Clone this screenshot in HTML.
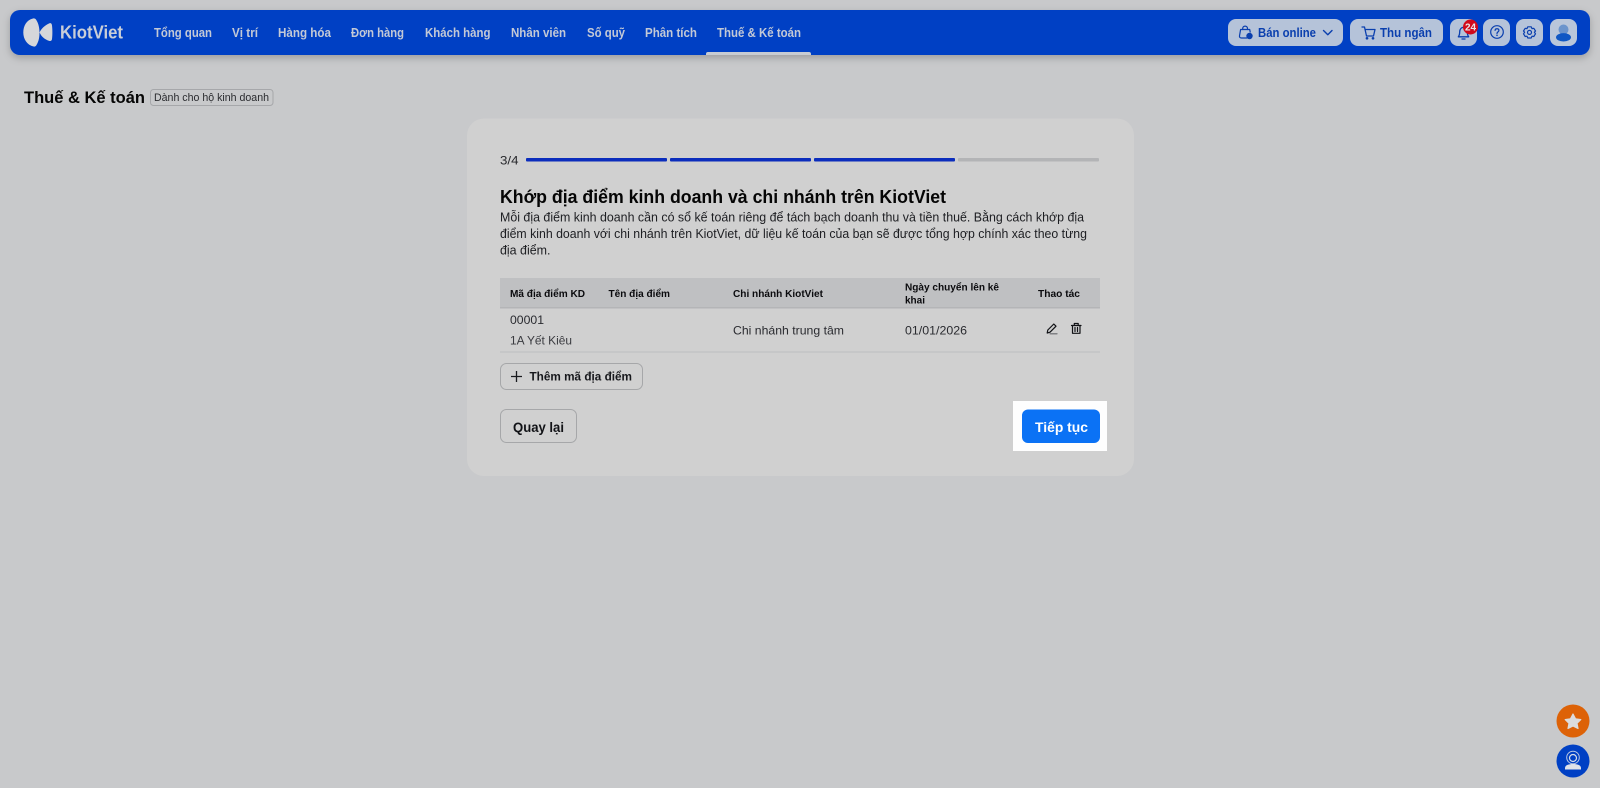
<!DOCTYPE html>
<html lang="vi">
<head>
<meta charset="utf-8">
<title>Thuế &amp; Kế toán</title>
<style>
html,body{margin:0;padding:0;width:1600px;height:788px;overflow:hidden;background:#c8c9cb}
svg{display:block;filter:blur(.3px)}
text{font-family:"Liberation Sans","Noto Sans CJK SC",sans-serif;white-space:pre}
.nav{font-size:13px;font-weight:700;fill:#c3c9d6}
.th{font-size:10.5px;font-weight:700;fill:#0b0b0e}
.td{font-size:12px;fill:#2a2b30}
.p{font-size:12.5px;fill:#1d1e22}
.bt{font-size:13px;font-weight:700;fill:#0a3fae}
</style>
</head>
<body>
<svg width="1600" height="788" viewBox="0 0 1600 788" xmlns="http://www.w3.org/2000/svg">
<defs>
<filter id="sh" x="-5%" y="-50%" width="110%" height="220%"><feDropShadow dx="0" dy="3" stdDeviation="4" flood-color="#000" flood-opacity=".22"/></filter>
</defs>
<rect width="1600" height="788" fill="#c8c9cb"/>

<!-- top bar -->
<rect x="10" y="10" width="1580" height="45" rx="10" fill="#0040c4" filter="url(#sh)"/>
<path d="M33 18.500C26.500 20 23.300 26 23.300 32.500C23.300 39 27 45 33.500 46.500C35 46.800 36 46 36.500 45C39 41 39.500 36.500 39.500 32.500C39.500 28 38.500 23.500 36.300 20C35.500 18.800 34.500 18.200 33 18.500Z" fill="#d6d7da"/>
<path d="M49.500 23.300C44.500 25.500 41 29 39.600 32.500C41 36 44.500 39.500 49.500 41C51 41.300 51.800 40.500 52 39C52.500 35 52.500 29.500 52 25.500C51.800 23.800 51 22.800 49.500 23.300Z" fill="#d6d7da"/>
<text x="60" y="38.500" font-size="18" font-weight="700" fill="#c9ced8" textLength="63" lengthAdjust="spacingAndGlyphs">KiotViet</text>

<text class="nav" x="154" y="37" textLength="58" lengthAdjust="spacingAndGlyphs">Tổng quan</text>
<text class="nav" x="232" y="37" textLength="26" lengthAdjust="spacingAndGlyphs">Vị trí</text>
<text class="nav" x="278" y="37" textLength="53" lengthAdjust="spacingAndGlyphs">Hàng hóa</text>
<text class="nav" x="351" y="37" textLength="53" lengthAdjust="spacingAndGlyphs">Đơn hàng</text>
<text class="nav" x="425" y="37" textLength="65.500" lengthAdjust="spacingAndGlyphs">Khách hàng</text>
<text class="nav" x="511" y="37" textLength="55" lengthAdjust="spacingAndGlyphs">Nhân viên</text>
<text class="nav" x="587" y="37" textLength="38" lengthAdjust="spacingAndGlyphs">Số quỹ</text>
<text class="nav" x="645" y="37" textLength="52" lengthAdjust="spacingAndGlyphs">Phân tích</text>
<text class="nav" x="717" y="37" textLength="84" lengthAdjust="spacingAndGlyphs">Thuế &amp; Kế toán</text>
<path d="M706 55V54Q706 52 708 52H809Q811 52 811 54V55Z" fill="#c8ccd3"/>

<!-- top right buttons -->
<rect x="1228" y="19" width="115" height="27" rx="8" fill="#b5c3d9"/>
<g fill="none" stroke="#0a3fae" stroke-width="1.200" stroke-linecap="round" stroke-linejoin="round">
<path d="M1247 38H1241.500C1240 38 1239.300 37 1239.500 35.800L1240.600 29.500H1249.700L1250.200 32"/>
<path d="M1242.700 29.500V28.500C1242.700 25.300 1247.500 25.300 1247.500 28.500V29.500"/>
<path d="M1323.500 30.500L1327.800 34.800L1332 30.500" stroke-width="1.400"/>
</g>
<circle cx="1249.500" cy="36" r="3.200" fill="#0a3fae"/>
<text class="bt" x="1258" y="37" textLength="58" lengthAdjust="spacingAndGlyphs">Bán online</text>

<rect x="1350" y="19" width="93" height="27" rx="8" fill="#b5c3d9"/>
<g fill="none" stroke="#0a3fae" stroke-width="1.300" stroke-linecap="round" stroke-linejoin="round">
<path d="M1362 27H1364.500L1366.500 36H1373.500L1375 29.500H1365"/>
<circle cx="1367" cy="38.300" r=".7"/><circle cx="1373" cy="38.300" r=".7"/>
</g>
<text class="bt" x="1380" y="37" textLength="52" lengthAdjust="spacingAndGlyphs">Thu ngân</text>

<rect x="1450" y="19" width="27" height="27" rx="8" fill="#b5c3d9"/>
<g fill="none" stroke="#0a3fae" stroke-width="1.300" stroke-linecap="round" stroke-linejoin="round">
<path d="M1458.300 36.800C1459.400 35.500 1459.700 34 1459.700 31.800C1459.700 29 1461.500 27.300 1463.500 27.300C1465.500 27.300 1467.300 29 1467.300 31.800C1467.300 34 1467.600 35.500 1468.700 36.800Z"/>
<path d="M1462 39H1465"/>
</g>
<circle cx="1470.500" cy="27" r="7.500" fill="#d1091b"/>
<text x="1470.500" y="30.500" font-size="10" font-weight="700" fill="#e8e8e8" text-anchor="middle">24</text>

<rect x="1483" y="19" width="27" height="27" rx="8" fill="#b5c3d9"/>
<circle cx="1497" cy="32" r="6.300" fill="none" stroke="#0a3fae" stroke-width="1.200"/>
<path d="M1495.100 30.400C1495.200 28.200 1498.900 28.200 1498.900 30.400C1498.900 31.900 1497 31.900 1497 33.500" fill="none" stroke="#0a3fae" stroke-width="1.200" stroke-linecap="round"/>
<circle cx="1497" cy="35.300" r=".8" fill="#0a3fae"/>

<rect x="1516" y="19" width="27" height="27" rx="8" fill="#b5c3d9"/>
<path d="M1527.800 26.800H1531.200L1532 28.600L1533.800 28.300L1535.500 31L1534.400 32.300L1535.500 33.800L1533.800 36.500L1532 36.200L1531.200 38H1527.800L1527 36.200L1525.200 36.500L1523.500 33.800L1524.600 32.300L1523.500 31L1525.200 28.300L1527 28.600Z" fill="none" stroke="#0a3fae" stroke-width="1.200" stroke-linejoin="round"/>
<circle cx="1529.500" cy="32.400" r="2" fill="none" stroke="#0a3fae" stroke-width="1.200"/>

<rect x="1550" y="19" width="27" height="27" rx="8" fill="#b9c6da"/>
<circle cx="1563.500" cy="29.500" r="5" fill="#6b94cc"/>
<ellipse cx="1563.500" cy="37.300" rx="7.500" ry="4.200" fill="#0f57c4"/>

<!-- page heading -->
<text x="24" y="103" font-size="17" font-weight="700" fill="#050505" textLength="121" lengthAdjust="spacingAndGlyphs">Thuế &amp; Kế toán</text>
<rect x="150.500" y="89.500" width="122.500" height="16" rx="3" fill="none" stroke="#a6a7aa"/>
<text x="154" y="101.200" font-size="11" fill="#2a2b2f" textLength="115" lengthAdjust="spacingAndGlyphs">Dành cho hộ kinh doanh</text>

<!-- card -->
<rect x="467" y="118.500" width="667" height="357.500" rx="17" fill="#d0d0d0"/>
<text x="500" y="164.500" font-size="12" fill="#26272b" textLength="18.500" lengthAdjust="spacingAndGlyphs">3/4</text>
<rect x="526" y="158" width="141" height="3.500" rx="1" fill="#0b2dbc"/>
<rect x="670" y="158" width="141" height="3.500" rx="1" fill="#0b2dbc"/>
<rect x="814" y="158" width="141" height="3.500" rx="1" fill="#0b2dbc"/>
<rect x="958" y="158" width="141" height="3.500" rx="1" fill="#b3b4b6"/>

<text x="500" y="203" font-size="18" font-weight="700" fill="#050505" textLength="446" lengthAdjust="spacingAndGlyphs">Khớp địa điểm kinh doanh và chi nhánh trên KiotViet</text>
<text class="p" x="500" y="221.500" textLength="584" lengthAdjust="spacingAndGlyphs">Mỗi địa điểm kinh doanh cần có sổ kế toán riêng để tách bạch doanh thu và tiền thuế. Bằng cách khớp địa</text>
<text class="p" x="500" y="238" textLength="587" lengthAdjust="spacingAndGlyphs">điểm kinh doanh với chi nhánh trên KiotViet, dữ liệu kế toán của bạn sẽ được tổng hợp chính xác theo từng</text>
<text class="p" x="500" y="254.500" textLength="50.500" lengthAdjust="spacingAndGlyphs">địa điểm.</text>

<!-- table -->
<rect x="500" y="278" width="600" height="30" fill="#bfc0c2"/>
<rect x="500" y="307" width="600" height="1.500" fill="#b4b5b7"/>
<text class="th" x="510" y="297" textLength="75" lengthAdjust="spacingAndGlyphs">Mã địa điểm KD</text>
<text class="th" x="608.500" y="297" textLength="61.500" lengthAdjust="spacingAndGlyphs">Tên địa điểm</text>
<text class="th" x="733" y="297" textLength="90" lengthAdjust="spacingAndGlyphs">Chi nhánh KiotViet</text>
<text class="th" x="905" y="290.500" textLength="94" lengthAdjust="spacingAndGlyphs">Ngày chuyển lên kê</text>
<text class="th" x="905" y="303.500" textLength="20" lengthAdjust="spacingAndGlyphs">khai</text>
<text class="th" x="1038" y="297" textLength="42" lengthAdjust="spacingAndGlyphs">Thao tác</text>

<text class="td" x="510" y="324" textLength="34" lengthAdjust="spacingAndGlyphs">00001</text>
<text class="td" x="510" y="344.500" textLength="62" lengthAdjust="spacingAndGlyphs" style="fill:#3a3b40">1A Yết Kiêu</text>
<text class="td" x="733" y="334.500" textLength="111" lengthAdjust="spacingAndGlyphs">Chi nhánh trung tâm</text>
<text class="td" x="905" y="334.500" textLength="62" lengthAdjust="spacingAndGlyphs">01/01/2026</text>

<g fill="none" stroke="#111216" stroke-width="1.200" stroke-linejoin="round" stroke-linecap="round">
<path d="M1047.200 333L1047.800 330L1053.800 324L1056 326.200L1050 332.200Z"/>
<path d="M1050 333.800H1057" stroke="#66676b"/>
<path d="M1071.500 325.500H1081M1074.300 325.500V323.500H1078.200V325.500"/>
<path d="M1072.500 325.500V333.300H1080V325.500"/>
<path d="M1075 327.500V331.500M1077.500 327.500V331.500"/>
</g>
<rect x="500" y="351.500" width="600" height="1" fill="#bdbec0"/>

<!-- add -->
<rect x="500.500" y="363.500" width="142" height="26" rx="6" fill="none" stroke="#a6a7a9"/>
<path d="M516.500 371V382M511 376.500H522" stroke="#1a1b1f" stroke-width="1.300" fill="none"/>
<text x="529.500" y="380.500" font-size="12" font-weight="700" fill="#17181c" textLength="102.500" lengthAdjust="spacingAndGlyphs">Thêm mã địa điểm</text>

<!-- actions -->
<rect x="500.500" y="409.500" width="76" height="33" rx="6" fill="none" stroke="#a6a7a9"/>
<text x="513" y="432" font-size="13.500" font-weight="700" fill="#111216" textLength="51" lengthAdjust="spacingAndGlyphs">Quay lại</text>
<rect x="1013" y="401" width="94" height="50" fill="#fefefe"/>
<rect x="1022" y="409.500" width="78" height="33.500" rx="6" fill="#0b72f5"/>
<text x="1035" y="432" font-size="14" font-weight="700" fill="#ffffff" textLength="53" lengthAdjust="spacingAndGlyphs">Tiếp tục</text>

<!-- floating -->
<circle cx="1573" cy="721" r="16.500" fill="#dd6207"/>
<path d="M1573 714L1575.500 718.800L1580.800 719.600L1577 723.300L1578 728.500L1573 726L1568 728.500L1569 723.300L1565.200 719.600L1570.500 718.800Z" fill="#dcdcdc" stroke="#dcdcdc" stroke-width="1.200" stroke-linejoin="round"/>
<circle cx="1573" cy="761" r="16.500" fill="#0040c4"/>
<circle cx="1573" cy="757.500" r="6.300" fill="none" stroke="#b9c6e2" stroke-width="1"/>
<circle cx="1573" cy="758" r="3.500" fill="none" stroke="#d8dde8" stroke-width="1.200"/>
<path d="M1565 769.500V768C1565 765 1569 764 1573 764C1577 764 1581 765 1581 768V769.500Z" fill="#dfe2e9"/>
</svg>
</body>
</html>
